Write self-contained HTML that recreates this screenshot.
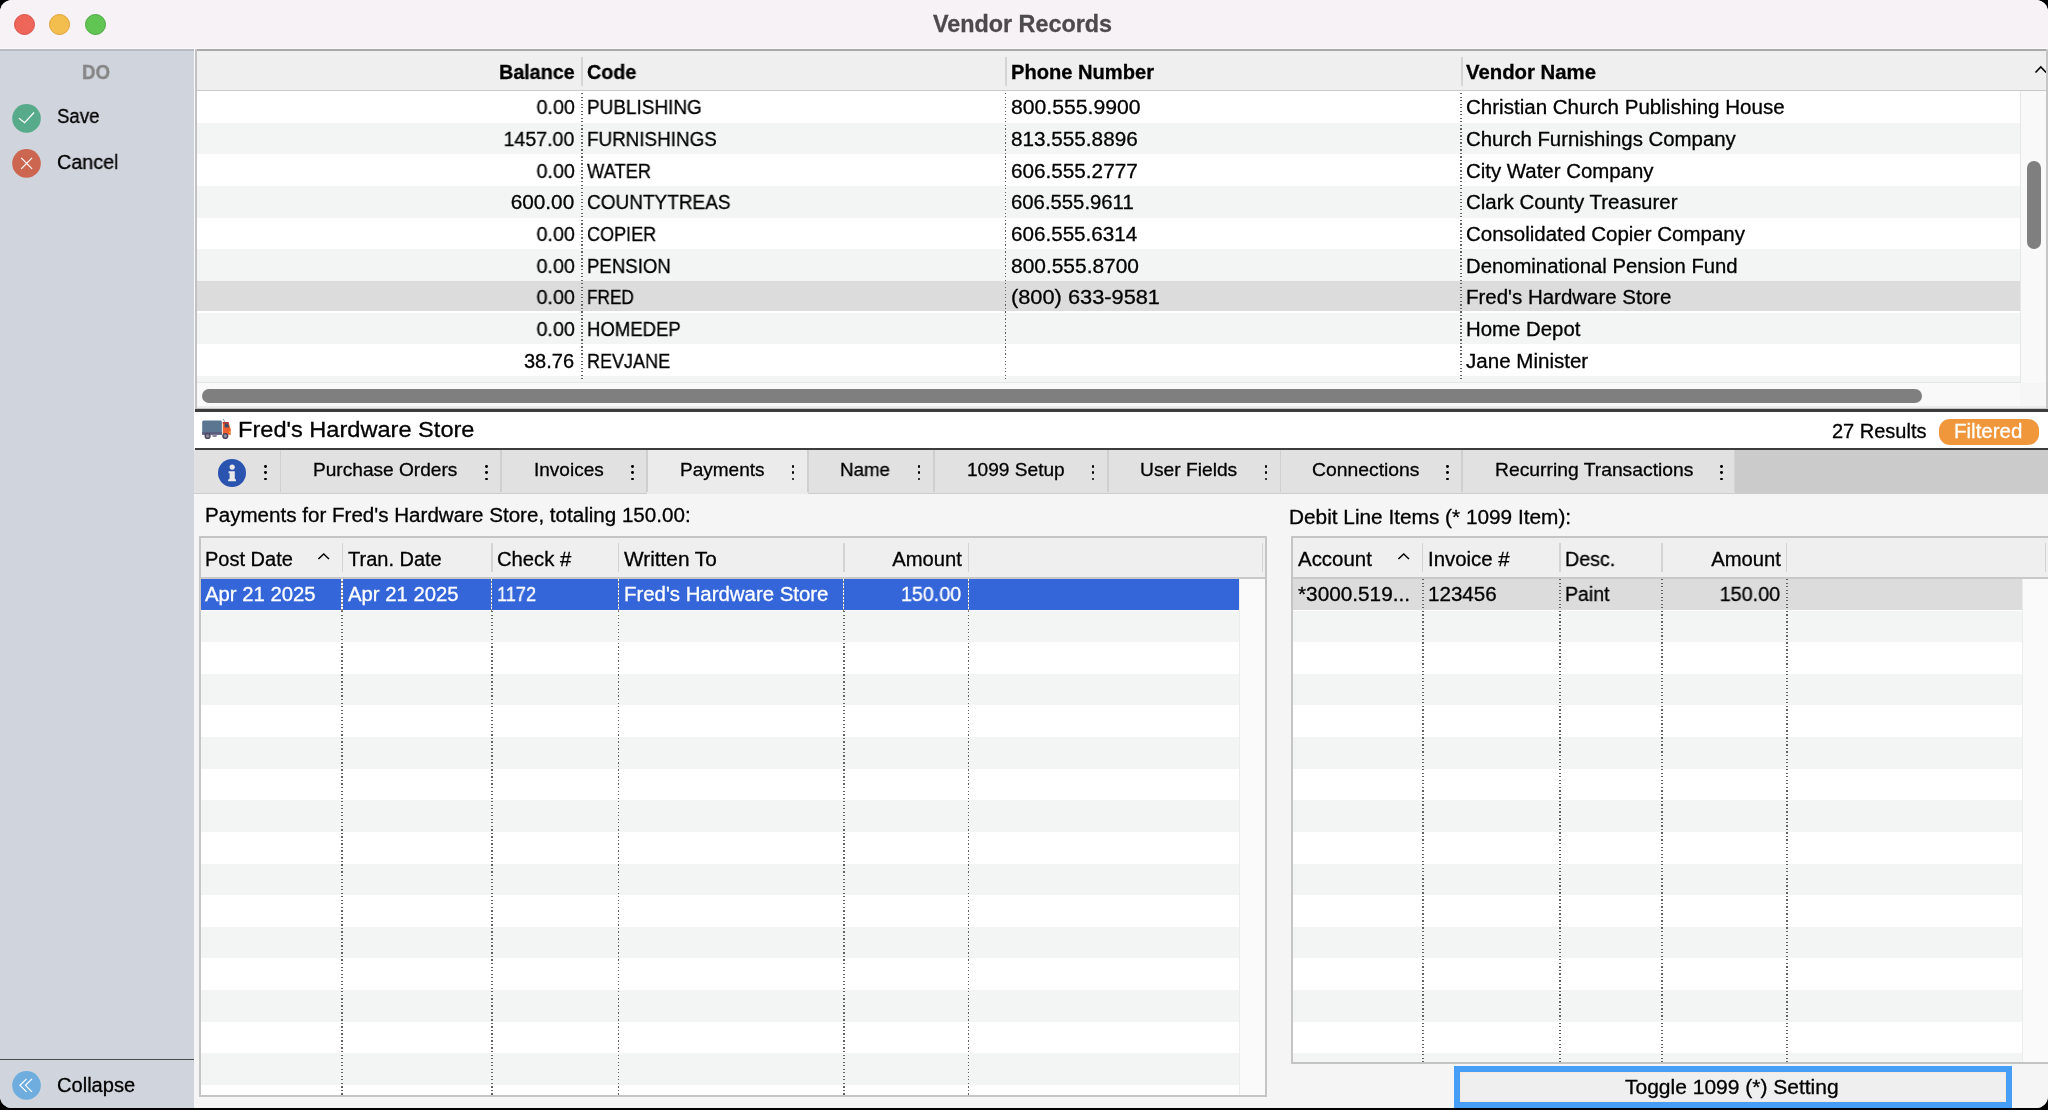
<!DOCTYPE html>
<html><head><meta charset="utf-8">
<style>
html,body{margin:0;padding:0;width:2048px;height:1110px;overflow:hidden;background:#000;}
*{box-sizing:border-box;}
#win{position:absolute;left:0;top:0;width:2048px;height:1108px;border-radius:12px;overflow:hidden;background:#f5f5f5;font-family:"Liberation Sans",sans-serif;color:#000;}
.a{position:absolute;}
.t{position:absolute;white-space:nowrap;will-change:transform;-webkit-text-stroke:0.3px currentColor;}
.dv{position:absolute;width:1.5px;background:repeating-linear-gradient(to bottom,#626262 0,#626262 1.3px,transparent 1.3px,transparent 3.52px);}
.dw{position:absolute;width:1.3px;background:repeating-linear-gradient(to bottom,#fff 0,#fff 2px,#8a8a8a 2px,#8a8a8a 3.52px);}
</style></head><body>
<div id="win">
<div class="a" style="left:0px;top:0px;width:2048px;height:48px;background:#f7f2f6"></div>
<div class="a" style="left:0px;top:48px;width:2048px;height:1px;background:#fcf8fb"></div>
<div class="a" style="left:14.100000000000001px;top:14px;width:21px;height:21px;border-radius:50%;background:#ee665a;border:0.8px solid #dd5045"></div>
<div class="a" style="left:49.2px;top:14px;width:21px;height:21px;border-radius:50%;background:#f4be4f;border:0.8px solid #dfa236"></div>
<div class="a" style="left:84.5px;top:14px;width:21px;height:21px;border-radius:50%;background:#61c554;border:0.8px solid #4ba83f"></div>
<div class="a" style="left:0px;top:49px;width:194px;height:1059px;background:#d0d4dd"></div>
<div class="a" style="left:0px;top:49px;width:194px;height:2px;background:#b6bbc5"></div>
<div class="a" style="left:194px;top:49px;width:1px;height:361px;background:#fafafa"></div>
<div class="a" style="left:195px;top:49px;width:2px;height:361px;background:#c2c2c2"></div>
<div class="a" style="left:0px;top:1058.5px;width:194px;height:1.6px;background:#4a4a4a"></div>
<svg class="a" style="left:12px;top:103.5px" width="29" height="29" viewBox="0 0 29 29"><circle cx="14.5" cy="14.4" r="14.3" fill="#57ab8b"/><polyline points="7,14.3 12.6,18.7 22.1,8.5" fill="none" stroke="#fff" stroke-width="1.2"/></svg>
<svg class="a" style="left:12px;top:149.2px" width="29" height="29" viewBox="0 0 29 29"><circle cx="14.5" cy="14.4" r="14.3" fill="#cc6650"/><path d="M9.2,8.9 L20.1,19.9 M20.1,8.9 L9.2,19.9" fill="none" stroke="#fff" stroke-width="1.2"/></svg>
<svg class="a" style="left:12px;top:1070.6px" width="29" height="29" viewBox="0 0 29 29"><circle cx="14.5" cy="14.4" r="14.3" fill="#6eadde"/><path d="M14.5,7.8 L8,14.3 L14.5,20.8 M20,7.8 L13.5,14.3 L20,20.8" fill="none" stroke="#fff" stroke-width="1.2"/></svg>
<div class="a" style="left:197px;top:49px;width:1849px;height:2px;background:#a9a9a9"></div>
<div class="a" style="left:197px;top:51px;width:1849px;height:39px;background:#efefef"></div>
<div class="a" style="left:197px;top:90px;width:1849px;height:1px;background:#c9c9c9"></div>
<div class="a" style="left:581px;top:56.5px;width:2px;height:29.5px;background:#d5d5d5"></div>
<div class="a" style="left:1005px;top:56.5px;width:2px;height:29.5px;background:#d5d5d5"></div>
<div class="a" style="left:1461px;top:56.5px;width:2px;height:29.5px;background:#d5d5d5"></div>
<svg class="a" style="left:2034px;top:64px" width="14" height="11" viewBox="0 0 14 11"><polyline points="1.5,8.5 6.8,3 12.2,8.5" fill="none" stroke="#000" stroke-width="1.6"/></svg>
<div class="a" style="left:197px;top:91px;width:1823px;height:292px;background:#fff"></div>
<div class="a" style="left:197px;top:122.84px;width:1823px;height:31.64px;background:#f3f4f4"></div>
<div class="a" style="left:197px;top:186.12px;width:1823px;height:31.64px;background:#f3f4f4"></div>
<div class="a" style="left:197px;top:249.40px;width:1823px;height:31.64px;background:#f3f4f4"></div>
<div class="a" style="left:197px;top:281.04px;width:1823px;height:29.84px;background:#dcdcdc"></div>
<div class="a" style="left:197px;top:312.68px;width:1823px;height:31.64px;background:#f3f4f4"></div>
<div class="a" style="left:197px;top:375.96px;width:1823px;height:6.04px;background:#f3f4f4"></div>
<div class="dv" style="left:581px;top:92.5px;height:289.5px"></div>
<div class="dv" style="left:1004.6px;top:92.5px;height:289.5px"></div>
<div class="dv" style="left:1460.4px;top:92.5px;height:289.5px"></div>
<div class="a" style="left:197px;top:382px;width:1823px;height:1px;background:#e6e6e6"></div>
<div class="a" style="left:2020px;top:91px;width:26px;height:292px;background:#f9f9f9;border-left:1px solid #e6e6e6"></div>
<div class="a" style="left:2027px;top:161px;width:14px;height:87.5px;background:#7f7f7f;border-radius:7px"></div>
<div class="a" style="left:197px;top:383px;width:1849px;height:23px;background:#f9f9f9"></div>
<div class="a" style="left:2020px;top:383px;width:26px;height:23px;background:#f6f6f6"></div>
<div class="a" style="left:202px;top:389px;width:1720px;height:13.7px;background:#7f7f7f;border-radius:7px"></div>
<div class="a" style="left:197px;top:406px;width:1849px;height:2px;background:#ececec"></div>
<div class="a" style="left:197px;top:408px;width:1849px;height:1px;background:#c4c4c4"></div>
<div class="a" style="left:195px;top:409px;width:1853px;height:2.5px;background:#3c3c3c"></div>
<div class="a" style="left:2046px;top:49px;width:2px;height:360px;background:#c6c6c6"></div>
<div class="a" style="left:194px;top:411.5px;width:1854px;height:37px;background:#fff"></div>
<div class="a" style="left:195px;top:448px;width:1853px;height:2px;background:#3c3c3c"></div>
<svg class="a" style="left:200px;top:417px" width="34" height="24" viewBox="0 0 34 24">
<path d="M3.7,3.6 L20.4,3.6 Q21.9,3.6 21.9,5.1 L21.9,17.7 L2.2,17.7 L2.2,5.1 Q2.2,3.6 3.7,3.6 Z" fill="#5a7691"/>
<rect x="2.2" y="15" width="19.7" height="2.7" fill="#5b5e7f"/>
<path d="M22.8,5 L28.6,5 L30.2,10.8 L30.8,12 L30.8,17.7 L22.8,17.7 Z" fill="#ef5f2e"/>
<rect x="22.8" y="5" width="5.8" height="1.6" fill="#c2302f"/>
<path d="M24.6,6.6 L28.1,6.6 L29.1,10.6 L24.6,10.6 Z" fill="#3e4c6a"/>
<rect x="29.2" y="14.6" width="1.5" height="1.3" fill="#ffd84a"/>
<circle cx="7.6" cy="19" r="3.1" fill="#4a4560"/><circle cx="7.6" cy="19" r="1.7" fill="#8e8c9c"/>
<circle cx="25.3" cy="19" r="3.1" fill="#4a4560"/><circle cx="25.3" cy="19" r="1.7" fill="#8e8c9c"/>
<rect x="12.3" y="17.4" width="4.6" height="2.6" rx="1.2" fill="#8a8898"/>
<path d="M23.4,2 L24.6,4.9" stroke="#9a9aa6" stroke-width="1"/>
</svg>
<div class="a" style="left:1938.9px;top:418.8px;width:99.9px;height:26px;background:#f0963b;border-radius:11px"></div>
<div class="a" style="left:194px;top:450px;width:1854px;height:43px;background:#e1e1e1"></div>
<div class="a" style="left:1735px;top:450px;width:313px;height:43px;background:#cbcbcb"></div>
<div class="a" style="left:646.5px;top:450px;width:161px;height:44px;background:#ebebeb"></div>
<div class="a" style="left:194px;top:493px;width:1854px;height:1.5px;background:#cdcdcd"></div>
<div class="a" style="left:646.5px;top:493px;width:161px;height:1px;background:#ebebeb"></div>
<div class="a" style="left:279.5px;top:450px;width:1.5px;height:42px;background:#cfcfcf"></div>
<div class="a" style="left:500px;top:450px;width:1.5px;height:42px;background:#cfcfcf"></div>
<div class="a" style="left:646px;top:450px;width:1.5px;height:42px;background:#cfcfcf"></div>
<div class="a" style="left:807px;top:450px;width:1.5px;height:42px;background:#cfcfcf"></div>
<div class="a" style="left:933px;top:450px;width:1.5px;height:42px;background:#cfcfcf"></div>
<div class="a" style="left:1107px;top:450px;width:1.5px;height:42px;background:#cfcfcf"></div>
<div class="a" style="left:1279.5px;top:450px;width:1.5px;height:42px;background:#cfcfcf"></div>
<div class="a" style="left:1461px;top:450px;width:1.5px;height:42px;background:#cfcfcf"></div>
<div class="a" style="left:1734px;top:450px;width:1px;height:42px;background:#d4d4d4"></div>
<svg class="a" style="left:218px;top:458.8px" width="28" height="28" viewBox="0 0 28 28"><circle cx="14" cy="14" r="14" fill="#2a54b0"/>
<circle cx="14.2" cy="8.1" r="2.6" fill="#e9e9e9"/>
<path d="M10.6,12.2 L16.8,12.2 L16.8,19.4 Q17.1,20.2 18,20.4 L18,22.2 L10.1,22.2 L10.1,20.4 Q11.3,20.2 11.6,19.4 L11.6,14.3 L10.6,14.3 Z" fill="#e9e9e9"/></svg>
<div class="a" style="left:264.3px;top:464.8px;width:2.8px;height:2.8px;border-radius:50%;background:#000"></div>
<div class="a" style="left:264.3px;top:471.0px;width:2.8px;height:2.8px;border-radius:50%;background:#000"></div>
<div class="a" style="left:264.3px;top:477.5px;width:2.8px;height:2.8px;border-radius:50%;background:#000"></div>
<div class="a" style="left:484.9px;top:464.8px;width:2.8px;height:2.8px;border-radius:50%;background:#000"></div>
<div class="a" style="left:484.9px;top:471.0px;width:2.8px;height:2.8px;border-radius:50%;background:#000"></div>
<div class="a" style="left:484.9px;top:477.5px;width:2.8px;height:2.8px;border-radius:50%;background:#000"></div>
<div class="a" style="left:630.9px;top:464.8px;width:2.8px;height:2.8px;border-radius:50%;background:#000"></div>
<div class="a" style="left:630.9px;top:471.0px;width:2.8px;height:2.8px;border-radius:50%;background:#000"></div>
<div class="a" style="left:630.9px;top:477.5px;width:2.8px;height:2.8px;border-radius:50%;background:#000"></div>
<div class="a" style="left:791.6px;top:464.8px;width:2.8px;height:2.8px;border-radius:50%;background:#000"></div>
<div class="a" style="left:791.6px;top:471.0px;width:2.8px;height:2.8px;border-radius:50%;background:#000"></div>
<div class="a" style="left:791.6px;top:477.5px;width:2.8px;height:2.8px;border-radius:50%;background:#000"></div>
<div class="a" style="left:917.6px;top:464.8px;width:2.8px;height:2.8px;border-radius:50%;background:#000"></div>
<div class="a" style="left:917.6px;top:471.0px;width:2.8px;height:2.8px;border-radius:50%;background:#000"></div>
<div class="a" style="left:917.6px;top:477.5px;width:2.8px;height:2.8px;border-radius:50%;background:#000"></div>
<div class="a" style="left:1091.6px;top:464.8px;width:2.8px;height:2.8px;border-radius:50%;background:#000"></div>
<div class="a" style="left:1091.6px;top:471.0px;width:2.8px;height:2.8px;border-radius:50%;background:#000"></div>
<div class="a" style="left:1091.6px;top:477.5px;width:2.8px;height:2.8px;border-radius:50%;background:#000"></div>
<div class="a" style="left:1264.6px;top:464.8px;width:2.8px;height:2.8px;border-radius:50%;background:#000"></div>
<div class="a" style="left:1264.6px;top:471.0px;width:2.8px;height:2.8px;border-radius:50%;background:#000"></div>
<div class="a" style="left:1264.6px;top:477.5px;width:2.8px;height:2.8px;border-radius:50%;background:#000"></div>
<div class="a" style="left:1446.4px;top:464.8px;width:2.8px;height:2.8px;border-radius:50%;background:#000"></div>
<div class="a" style="left:1446.4px;top:471.0px;width:2.8px;height:2.8px;border-radius:50%;background:#000"></div>
<div class="a" style="left:1446.4px;top:477.5px;width:2.8px;height:2.8px;border-radius:50%;background:#000"></div>
<div class="a" style="left:1720.1px;top:464.8px;width:2.8px;height:2.8px;border-radius:50%;background:#000"></div>
<div class="a" style="left:1720.1px;top:471.0px;width:2.8px;height:2.8px;border-radius:50%;background:#000"></div>
<div class="a" style="left:1720.1px;top:477.5px;width:2.8px;height:2.8px;border-radius:50%;background:#000"></div>
<div class="a" style="left:194px;top:494px;width:1854px;height:614px;background:#f5f5f5"></div>
<div class="a" style="left:199px;top:536px;width:1068px;height:561px;background:#fff;border:2px solid #c5c5c5"></div>
<div class="a" style="left:201px;top:538px;width:1064px;height:39.5px;background:#efefef"></div>
<div class="a" style="left:201px;top:577.3px;width:1064px;height:1.5px;background:#c9c9c9"></div>
<div class="a" style="left:341.5px;top:543.4px;width:1.6px;height:29px;background:#d4d4d4"></div>
<div class="a" style="left:491px;top:543.4px;width:1.6px;height:29px;background:#d4d4d4"></div>
<div class="a" style="left:617.5px;top:543.4px;width:1.6px;height:29px;background:#d4d4d4"></div>
<div class="a" style="left:843px;top:543.4px;width:1.6px;height:29px;background:#d4d4d4"></div>
<div class="a" style="left:967.8px;top:543.4px;width:1.6px;height:29px;background:#d4d4d4"></div>
<div class="a" style="left:1261.5px;top:543.4px;width:1.6px;height:29px;background:#d4d4d4"></div>
<svg class="a" style="left:316px;top:551px" width="15" height="11" viewBox="0 0 15 11"><polyline points="2.4,8 7.7,3 13,8" fill="none" stroke="#000" stroke-width="1.5"/></svg>
<div class="a" style="left:201px;top:578.90px;width:1037.5px;height:30.63px;background:#3566d9"></div>
<div class="a" style="left:201px;top:610.53px;width:1037.5px;height:31.63px;background:#f3f4f4"></div>
<div class="a" style="left:201px;top:673.79px;width:1037.5px;height:31.63px;background:#f3f4f4"></div>
<div class="a" style="left:201px;top:737.05px;width:1037.5px;height:31.63px;background:#f3f4f4"></div>
<div class="a" style="left:201px;top:800.31px;width:1037.5px;height:31.63px;background:#f3f4f4"></div>
<div class="a" style="left:201px;top:863.57px;width:1037.5px;height:31.63px;background:#f3f4f4"></div>
<div class="a" style="left:201px;top:926.83px;width:1037.5px;height:31.63px;background:#f3f4f4"></div>
<div class="a" style="left:201px;top:990.09px;width:1037.5px;height:31.63px;background:#f3f4f4"></div>
<div class="a" style="left:201px;top:1053.35px;width:1037.5px;height:31.63px;background:#f3f4f4"></div>
<div class="dv" style="left:341.4px;top:610.5px;height:485px"></div>
<div class="dw" style="left:341.4px;top:579px;height:31.5px"></div>
<div class="dv" style="left:491px;top:610.5px;height:485px"></div>
<div class="dw" style="left:491px;top:579px;height:31.5px"></div>
<div class="dv" style="left:617.5px;top:610.5px;height:485px"></div>
<div class="dw" style="left:617.5px;top:579px;height:31.5px"></div>
<div class="dv" style="left:843px;top:610.5px;height:485px"></div>
<div class="dw" style="left:843px;top:579px;height:31.5px"></div>
<div class="dv" style="left:967.5px;top:610.5px;height:485px"></div>
<div class="dw" style="left:967.5px;top:579px;height:31.5px"></div>
<div class="a" style="left:1238.5px;top:578.8px;width:26.5px;height:516.2px;background:#fafafa;border-left:1px solid #ececec"></div>
<div class="a" style="left:1291px;top:536px;width:760px;height:527.5px;background:#fff;border:2px solid #c5c5c5;border-right:none"></div>
<div class="a" style="left:1293px;top:538px;width:755px;height:39.5px;background:#efefef"></div>
<div class="a" style="left:1293px;top:577.3px;width:755px;height:1.5px;background:#c9c9c9"></div>
<div class="a" style="left:1421.5px;top:543.4px;width:1.6px;height:29px;background:#d4d4d4"></div>
<div class="a" style="left:1559px;top:543.4px;width:1.6px;height:29px;background:#d4d4d4"></div>
<div class="a" style="left:1661.3px;top:543.4px;width:1.6px;height:29px;background:#d4d4d4"></div>
<div class="a" style="left:1785.8px;top:543.4px;width:1.6px;height:29px;background:#d4d4d4"></div>
<div class="a" style="left:2044.5px;top:543.4px;width:1.6px;height:29px;background:#d4d4d4"></div>
<svg class="a" style="left:1396px;top:551px" width="15" height="11" viewBox="0 0 15 11"><polyline points="2.4,8 7.7,3 13,8" fill="none" stroke="#000" stroke-width="1.5"/></svg>
<div class="a" style="left:1293px;top:578.90px;width:729px;height:30.63px;background:#dcdcdc"></div>
<div class="a" style="left:1293px;top:610.53px;width:729px;height:31.63px;background:#f3f4f4"></div>
<div class="a" style="left:1293px;top:673.79px;width:729px;height:31.63px;background:#f3f4f4"></div>
<div class="a" style="left:1293px;top:737.05px;width:729px;height:31.63px;background:#f3f4f4"></div>
<div class="a" style="left:1293px;top:800.31px;width:729px;height:31.63px;background:#f3f4f4"></div>
<div class="a" style="left:1293px;top:863.57px;width:729px;height:31.63px;background:#f3f4f4"></div>
<div class="a" style="left:1293px;top:926.83px;width:729px;height:31.63px;background:#f3f4f4"></div>
<div class="a" style="left:1293px;top:990.09px;width:729px;height:31.63px;background:#f3f4f4"></div>
<div class="a" style="left:1293px;top:1053.35px;width:729px;height:8.65px;background:#f3f4f4"></div>
<div class="dv" style="left:1422px;top:579px;height:483px"></div>
<div class="dv" style="left:1559.3px;top:579px;height:483px"></div>
<div class="dv" style="left:1661.3px;top:579px;height:483px"></div>
<div class="dv" style="left:1786px;top:579px;height:483px"></div>
<div class="a" style="left:2022px;top:578.8px;width:26px;height:483.5px;background:#fafafa;border-left:1px solid #ececec"></div>
<div class="a" style="left:1292px;top:1062px;width:756px;height:2px;background:#c4c4c4"></div>
<div class="a" style="left:1454px;top:1066px;width:558px;height:42px;background:#479ef7"></div>
<div class="a" style="left:1460px;top:1072px;width:546px;height:30px;background:#efefef;border:0.6px solid #f5e9df"></div>
<div class="t" style="top:12.56px;font-size:23.2px;line-height:23.2px;font-weight:bold;color:#4d4a4d;left:933.30px;transform:scaleX(1.0066);transform-origin:0 0;">Vendor Records</div>
<div class="t" style="top:62.37px;font-size:20px;line-height:20px;font-weight:bold;color:#858585;left:82.00px;transform:scaleX(0.9333);transform-origin:0 0;">DO</div>
<div class="t" style="top:106.27px;font-size:20px;line-height:20px;left:57.00px;transform:scaleX(0.9321);transform-origin:0 0;">Save</div>
<div class="t" style="top:151.97px;font-size:20px;line-height:20px;left:57.00px;transform:scaleX(0.9877);transform-origin:0 0;">Cancel</div>
<div class="t" style="top:1074.87px;font-size:20px;line-height:20px;left:56.60px;transform:scaleX(1.0048);transform-origin:0 0;">Collapse</div>
<div class="t" style="top:61.97px;font-size:20px;line-height:20px;font-weight:bold;left:497.98px;transform:scaleX(0.9867);transform-origin:100% 0;">Balance</div>
<div class="t" style="top:61.97px;font-size:20px;line-height:20px;font-weight:bold;left:586.90px;transform:scaleX(0.9840);transform-origin:0 0;">Code</div>
<div class="t" style="top:61.97px;font-size:20px;line-height:20px;font-weight:bold;left:1010.70px;transform:scaleX(1.0053);transform-origin:0 0;">Phone Number</div>
<div class="t" style="top:61.97px;font-size:20px;line-height:20px;font-weight:bold;left:1466.20px;transform:scaleX(1.0170);transform-origin:0 0;">Vendor Name</div>
<div class="t" style="top:97.47px;font-size:20px;line-height:20px;left:535.56px;transform:scaleX(0.9862);transform-origin:100% 0;">0.00</div>
<div class="t" style="top:97.47px;font-size:20px;line-height:20px;left:587.00px;transform:scaleX(0.9475);transform-origin:0 0;">PUBLISHING</div>
<div class="t" style="top:97.47px;font-size:20px;line-height:20px;left:1010.70px;transform:scaleX(1.0585);transform-origin:0 0;">800.555.9900</div>
<div class="t" style="top:97.47px;font-size:20px;line-height:20px;left:1466.00px;transform:scaleX(1.0272);transform-origin:0 0;">Christian Church Publishing House</div>
<div class="t" style="top:129.11px;font-size:20px;line-height:20px;left:502.20px;transform:scaleX(0.9779);transform-origin:100% 0;">1457.00</div>
<div class="t" style="top:129.11px;font-size:20px;line-height:20px;left:587.00px;transform:scaleX(0.9412);transform-origin:0 0;">FURNISHINGS</div>
<div class="t" style="top:129.11px;font-size:20px;line-height:20px;left:1010.70px;transform:scaleX(1.0356);transform-origin:0 0;">813.555.8896</div>
<div class="t" style="top:129.11px;font-size:20px;line-height:20px;left:1466.00px;transform:scaleX(1.0198);transform-origin:0 0;">Church Furnishings Company</div>
<div class="t" style="top:160.75px;font-size:20px;line-height:20px;left:535.56px;transform:scaleX(0.9862);transform-origin:100% 0;">0.00</div>
<div class="t" style="top:160.75px;font-size:20px;line-height:20px;left:587.00px;transform:scaleX(0.9157);transform-origin:0 0;">WATER</div>
<div class="t" style="top:160.75px;font-size:20px;line-height:20px;left:1010.70px;transform:scaleX(1.0356);transform-origin:0 0;">606.555.2777</div>
<div class="t" style="top:160.75px;font-size:20px;line-height:20px;left:1466.00px;transform:scaleX(1.0204);transform-origin:0 0;">City Water Company</div>
<div class="t" style="top:192.39px;font-size:20px;line-height:20px;left:513.33px;transform:scaleX(1.0381);transform-origin:100% 0;">600.00</div>
<div class="t" style="top:192.39px;font-size:20px;line-height:20px;left:587.00px;transform:scaleX(0.9495);transform-origin:0 0;">COUNTYTREAS</div>
<div class="t" style="top:192.39px;font-size:20px;line-height:20px;left:1010.70px;transform:scaleX(1.0152);transform-origin:0 0;">606.555.9611</div>
<div class="t" style="top:192.39px;font-size:20px;line-height:20px;left:1466.00px;transform:scaleX(1.0230);transform-origin:0 0;">Clark County Treasurer</div>
<div class="t" style="top:224.03px;font-size:20px;line-height:20px;left:535.56px;transform:scaleX(0.9862);transform-origin:100% 0;">0.00</div>
<div class="t" style="top:224.03px;font-size:20px;line-height:20px;left:587.00px;transform:scaleX(0.9011);transform-origin:0 0;">COPIER</div>
<div class="t" style="top:224.03px;font-size:20px;line-height:20px;left:1010.70px;transform:scaleX(1.0315);transform-origin:0 0;">606.555.6314</div>
<div class="t" style="top:224.03px;font-size:20px;line-height:20px;left:1466.00px;transform:scaleX(1.0240);transform-origin:0 0;">Consolidated Copier Company</div>
<div class="t" style="top:255.67px;font-size:20px;line-height:20px;left:535.56px;transform:scaleX(0.9862);transform-origin:100% 0;">0.00</div>
<div class="t" style="top:255.67px;font-size:20px;line-height:20px;left:587.00px;transform:scaleX(0.9308);transform-origin:0 0;">PENSION</div>
<div class="t" style="top:255.67px;font-size:20px;line-height:20px;left:1010.70px;transform:scaleX(1.0462);transform-origin:0 0;">800.555.8700</div>
<div class="t" style="top:255.67px;font-size:20px;line-height:20px;left:1466.00px;transform:scaleX(1.0136);transform-origin:0 0;">Denominational Pension Fund</div>
<div class="t" style="top:287.31px;font-size:20px;line-height:20px;left:535.56px;transform:scaleX(0.9862);transform-origin:100% 0;">0.00</div>
<div class="t" style="top:287.31px;font-size:20px;line-height:20px;left:587.00px;transform:scaleX(0.8595);transform-origin:0 0;">FRED</div>
<div class="t" style="top:287.31px;font-size:20px;line-height:20px;left:1010.70px;transform:scaleX(1.0893);transform-origin:0 0;">(800) 633-9581</div>
<div class="t" style="top:287.31px;font-size:20px;line-height:20px;left:1466.00px;transform:scaleX(1.0236);transform-origin:0 0;">Fred&#x27;s Hardware Store</div>
<div class="t" style="top:318.95px;font-size:20px;line-height:20px;left:535.56px;transform:scaleX(0.9862);transform-origin:100% 0;">0.00</div>
<div class="t" style="top:318.95px;font-size:20px;line-height:20px;left:587.00px;transform:scaleX(0.9266);transform-origin:0 0;">HOMEDEP</div>
<div class="t" style="top:318.95px;font-size:20px;line-height:20px;left:1466.00px;transform:scaleX(1.0189);transform-origin:0 0;">Home Depot</div>
<div class="t" style="top:350.59px;font-size:20px;line-height:20px;left:524.44px;">38.76</div>
<div class="t" style="top:350.59px;font-size:20px;line-height:20px;left:587.00px;transform:scaleX(0.9008);transform-origin:0 0;">REVJANE</div>
<div class="t" style="top:350.59px;font-size:20px;line-height:20px;left:1466.00px;transform:scaleX(1.0274);transform-origin:0 0;">Jane Minister</div>
<div class="t" style="top:419.27px;font-size:22.6px;line-height:22.6px;left:237.50px;transform:scaleX(1.0438);transform-origin:0 0;">Fred&#x27;s Hardware Store</div>
<div class="t" style="top:421.07px;font-size:20px;line-height:20px;left:1832.00px;">27 Results</div>
<div class="t" style="top:421.07px;font-size:20px;line-height:20px;color:#fff;left:1953.60px;transform:scaleX(1.0254);transform-origin:0 0;">Filtered</div>
<div class="t" style="top:460.12px;font-size:19px;line-height:19px;left:313.30px;transform:scaleX(1.0054);transform-origin:0 0;">Purchase Orders</div>
<div class="t" style="top:460.12px;font-size:19px;line-height:19px;left:534.00px;">Invoices</div>
<div class="t" style="top:460.12px;font-size:19px;line-height:19px;left:679.70px;">Payments</div>
<div class="t" style="top:460.12px;font-size:19px;line-height:19px;left:840.40px;transform:scaleX(0.9864);transform-origin:0 0;">Name</div>
<div class="t" style="top:460.12px;font-size:19px;line-height:19px;left:967.30px;transform:scaleX(1.0051);transform-origin:0 0;">1099 Setup</div>
<div class="t" style="top:460.12px;font-size:19px;line-height:19px;left:1140.00px;transform:scaleX(1.0117);transform-origin:0 0;">User Fields</div>
<div class="t" style="top:460.12px;font-size:19px;line-height:19px;left:1312.40px;transform:scaleX(1.0178);transform-origin:0 0;">Connections</div>
<div class="t" style="top:460.12px;font-size:19px;line-height:19px;left:1494.90px;transform:scaleX(1.0155);transform-origin:0 0;">Recurring Transactions</div>
<div class="t" style="top:504.97px;font-size:20px;line-height:20px;left:204.90px;transform:scaleX(1.0292);transform-origin:0 0;">Payments for Fred&#x27;s Hardware Store, totaling 150.00:</div>
<div class="t" style="top:506.57px;font-size:20px;line-height:20px;left:1288.50px;transform:scaleX(1.0401);transform-origin:0 0;">Debit Line Items (* 1099 Item):</div>
<div class="t" style="top:549.07px;font-size:20px;line-height:20px;left:205.00px;">Post Date</div>
<div class="t" style="top:549.07px;font-size:20px;line-height:20px;left:347.70px;">Tran. Date</div>
<div class="t" style="top:549.07px;font-size:20px;line-height:20px;left:497.00px;transform:scaleX(1.0112);transform-origin:0 0;">Check #</div>
<div class="t" style="top:549.07px;font-size:20px;line-height:20px;left:623.90px;transform:scaleX(1.0392);transform-origin:0 0;">Written To</div>
<div class="t" style="top:549.07px;font-size:20px;line-height:20px;left:892.66px;transform:scaleX(1.0111);transform-origin:100% 0;">Amount</div>
<div class="t" style="top:584.27px;font-size:20px;line-height:20px;color:#fff;left:205.00px;transform:scaleX(1.0148);transform-origin:0 0;">Apr 21 2025</div>
<div class="t" style="top:584.27px;font-size:20px;line-height:20px;color:#fff;left:347.50px;transform:scaleX(1.0139);transform-origin:0 0;">Apr 21 2025</div>
<div class="t" style="top:584.27px;font-size:20px;line-height:20px;color:#fff;left:497.00px;transform:scaleX(0.9066);transform-origin:0 0;">1172</div>
<div class="t" style="top:584.27px;font-size:20px;line-height:20px;color:#fff;left:623.90px;transform:scaleX(1.0191);transform-origin:0 0;">Fred&#x27;s Hardware Store</div>
<div class="t" style="top:584.27px;font-size:20px;line-height:20px;color:#fff;left:900.43px;transform:scaleX(0.9841);transform-origin:100% 0;">150.00</div>
<div class="t" style="top:549.07px;font-size:20px;line-height:20px;left:1297.50px;transform:scaleX(1.0226);transform-origin:0 0;">Account</div>
<div class="t" style="top:549.07px;font-size:20px;line-height:20px;left:1427.50px;transform:scaleX(1.0192);transform-origin:0 0;">Invoice #</div>
<div class="t" style="top:549.07px;font-size:20px;line-height:20px;left:1564.70px;transform:scaleX(0.9839);transform-origin:0 0;">Desc.</div>
<div class="t" style="top:549.07px;font-size:20px;line-height:20px;left:1711.56px;transform:scaleX(1.0111);transform-origin:100% 0;">Amount</div>
<div class="t" style="top:584.27px;font-size:20px;line-height:20px;left:1297.50px;transform:scaleX(1.0382);transform-origin:0 0;">*3000.519...</div>
<div class="t" style="top:584.27px;font-size:20px;line-height:20px;left:1427.50px;transform:scaleX(1.0292);transform-origin:0 0;">123456</div>
<div class="t" style="top:584.27px;font-size:20px;line-height:20px;left:1564.70px;transform:scaleX(0.9760);transform-origin:0 0;">Paint</div>
<div class="t" style="top:584.27px;font-size:20px;line-height:20px;left:1718.83px;transform:scaleX(0.9890);transform-origin:100% 0;">150.00</div>
<div class="t" style="top:1077.37px;font-size:20px;line-height:20px;left:1624.70px;transform:scaleX(1.0498);transform-origin:0 0;">Toggle 1099 (*) Setting</div>
</div>
</body></html>
